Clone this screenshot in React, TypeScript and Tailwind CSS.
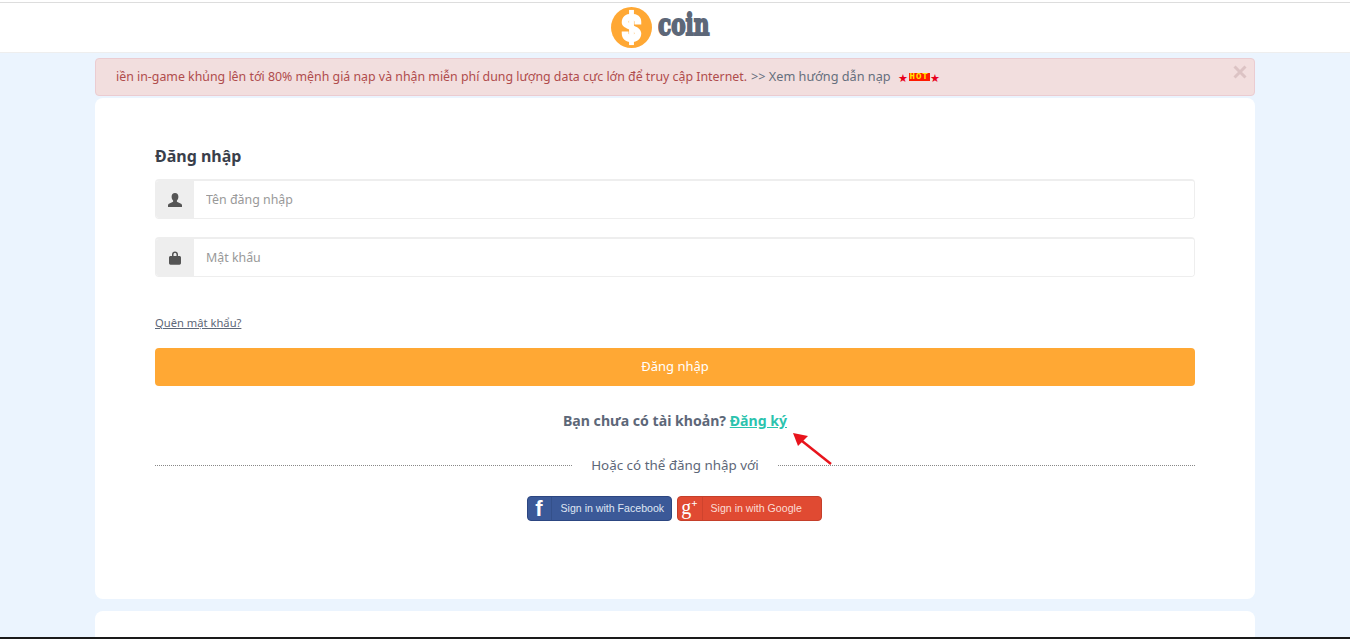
const font = { fontFamily: '"Noto Sans", "Liberation Sans", sans-serif' }

function UserIcon() {
  return (
    <svg width="14" height="14" viewBox="0 0 14 14" fill="currentColor">
      <path d="M7 0c2.2 0 3.4 1.5 3.4 3.7 0 1.5-.6 3-1.5 3.8v1.3l3.6 1.6c.9.4 1.5 1 1.5 1.8V14H0v-1.8c0-.8.6-1.4 1.5-1.8l3.6-1.6V7.500C4.200 6.700 3.600 5.200 3.600 3.700 3.600 1.500 4.800 0 7 0z" />
    </svg>
  )
}

function LockIcon() {
  return (
    <svg width="12" height="14" viewBox="0 0 12 14" fill="currentColor">
      <path d="M3 5V3.500C3 1.500 4.200.5 6 .5s3 1 3 3V5h1.500c.8 0 1.500.7 1.500 1.500V12c0 1-.7 1.700-1.500 1.700h-9C.7 13.700 0 13 0 12V6.500C0 5.700.7 5 1.500 5zm1.500 0h3V3.500c0-1-.5-1.600-1.500-1.600s-1.500.6-1.500 1.600z" />
    </svg>
  )
}

function Field({ placeholder, icon }: { placeholder: string; icon: React.ReactNode }) {
  return (
    <div className="flex h-10 overflow-hidden rounded border border-t-2 border-[#eeeeee]">
      <div className="flex w-[38px] shrink-0 items-center justify-center bg-[#eeeeee] text-[#555555]">{icon}</div>
      <input
        placeholder={placeholder}
        className="min-w-0 flex-1 bg-white pt-[1px] pl-3 text-[12.4px] text-[#555555] outline-none placeholder:text-[#999999]"
      />
    </div>
  )
}

export default function App() {
  return (
    <div style={font} className="flex h-[639px] flex-col overflow-hidden border-b-2 border-[#1a1a1a] bg-[#ebf4fe]">
      <header className="border-b border-[#eeeeee] bg-white pt-[2px]">
        <div className="flex h-[50px] items-center justify-center gap-[6px] border-t border-[#dddddd] pr-[30px]">
          <svg width="41" height="41" viewBox="0 0 42 42">
            <circle cx="21" cy="21" r="21" fill="#ffa834" />
            <rect x="18.500" y="3" width="5" height="36" fill="#fff" />
            <path
              d="M11 16c0-6 4-9 10-9s10 3 10 8v3h-7v-3c0-1-1-2-3-2s-3 1-3 2c0 4 13 4 13 12 0 6-4 9-10 9s-10-3-10-9v-2h7v2c0 1 1 2 3 2s3-1 3-2c0-4-13-4-13-11z"
              fill="#fff"
            />
          </svg>
          <span className="mb-[5px] w-[51px] origin-left scale-x-[0.72] text-[30px] leading-none font-bold whitespace-nowrap text-[#5d6778] [-webkit-text-stroke:2px_#5d6778] [font-family:'DejaVu_Serif',serif]">
            coin
          </span>
        </div>
      </header>

      <main className="mx-auto w-[1160px]">
        <div className="relative mt-[5px] flex h-[38px] items-center overflow-hidden rounded border border-[#ebccd1] bg-[#f2dede] pl-5 text-[12.37px] whitespace-nowrap text-[#b04c4c]">
          <span>iền in-game khủng lên tới 80% mệnh giá nạp và nhận miễn phí dung lượng data cực lớn để truy cập Internet.</span>
          <span className="ml-1 text-[12.7px] text-[#666f7d]">&gt;&gt; Xem hướng dẫn nạp</span>
          <span className="ml-[7px] flex items-center text-[11px] leading-none text-[#e8001c]">
            ★
            <span className="ml-[1px] bg-[#ff1a00] px-[1px] text-[9px] leading-[8px] font-bold tracking-[1px] text-[#ffe600] [font-family:'Liberation_Mono',monospace]">
              HOT
            </span>
            ★
          </span>
          <svg width="14" height="14" viewBox="0 0 14 14" className="absolute top-[6px] right-[7px]">
            <path d="M1.500 1.500 12.500 12.500M12.500 1.500 1.500 12.500" stroke="#dcc3c4" strokeWidth="3" />
          </svg>
        </div>

        <section className="mt-[2px] h-[501px] rounded-lg bg-white px-[60px] pt-[47px]">
          <h1 className="text-[16px] leading-[22px] font-bold text-[#3a3f4b]">Đăng nhập</h1>
          <div className="mt-[12px] flex flex-col gap-[18px]">
            <Field placeholder="Tên đăng nhập" icon={<UserIcon />} />
            <Field placeholder="Mật khẩu" icon={<LockIcon />} />
          </div>
          <a href="#" className="mt-[38px] block text-[11.2px] leading-4 text-[#5d6778] underline">
            Quên mật khẩu?
          </a>
          <button className="mt-[17px] h-[38px] w-full rounded bg-[#ffa834] pb-[1px] text-[13px] text-white">
            Đăng nhập
          </button>

          <p className="mt-[25px] text-center text-[14.1px] leading-5 font-bold text-[#5d6778]">
            Bạn chưa có tài khoản?{' '}
            <a href="#" className="text-[#2bc3ae] underline">
              Đăng ký
            </a>
          </p>

          <div className="relative mt-[24px] flex h-5 items-center">
            <div className="flex-1 border-t border-dotted border-[#888888]" />
            <span className="w-[206px] text-center text-[13.4px] text-[#5d6778]">Hoặc có thể đăng nhập với</span>
            <div className="flex-1 border-t border-dotted border-[#888888]" />
            <svg width="46" height="42" viewBox="0 0 46 42" className="absolute top-[-31px] left-[632px]">
              <path d="M44 40 10 13" stroke="#e8141c" strokeWidth="2.500" />
              <path d="M6 9 21 12 11 22z" fill="#e8141c" />
            </svg>
          </div>

          <div className="mt-[21px] flex justify-center gap-[5px] pr-[2px]">
            <button className="flex h-[25px] w-[145px] items-center rounded-sm border border-[#2c4681] bg-[#3b5998] text-[10.6px] text-[#dfe6f3]">
              <span className="flex h-full w-[24px] shrink-0 items-center justify-center border-r border-[#34508a] text-[22px] font-bold text-white [font-family:'Liberation_Sans',sans-serif]">
                f
              </span>
              <span className="ml-[9px] whitespace-nowrap [font-family:'Liberation_Sans',sans-serif]">
                Sign in with Facebook
              </span>
            </button>
            <button className="flex h-[25px] w-[145px] items-center rounded-sm border border-[#c53f2a] bg-[#e04a32] text-[10.6px] text-[#fbdcd5]">
              <span className="flex h-full w-[25px] shrink-0 items-center justify-center border-r border-[#cf432d] pb-[3px] text-[20px] leading-none text-white [font-family:'Liberation_Serif',serif]">
                g<span className="mt-[-7px] text-[11px] font-bold">+</span>
              </span>
              <span className="ml-[8px] whitespace-nowrap [font-family:'Liberation_Sans',sans-serif]">
                Sign in with Google
              </span>
            </button>
          </div>
        </section>

        <section className="mt-[12px] h-[40px] rounded-t-lg bg-white" />
      </main>
    </div>
  )
}
